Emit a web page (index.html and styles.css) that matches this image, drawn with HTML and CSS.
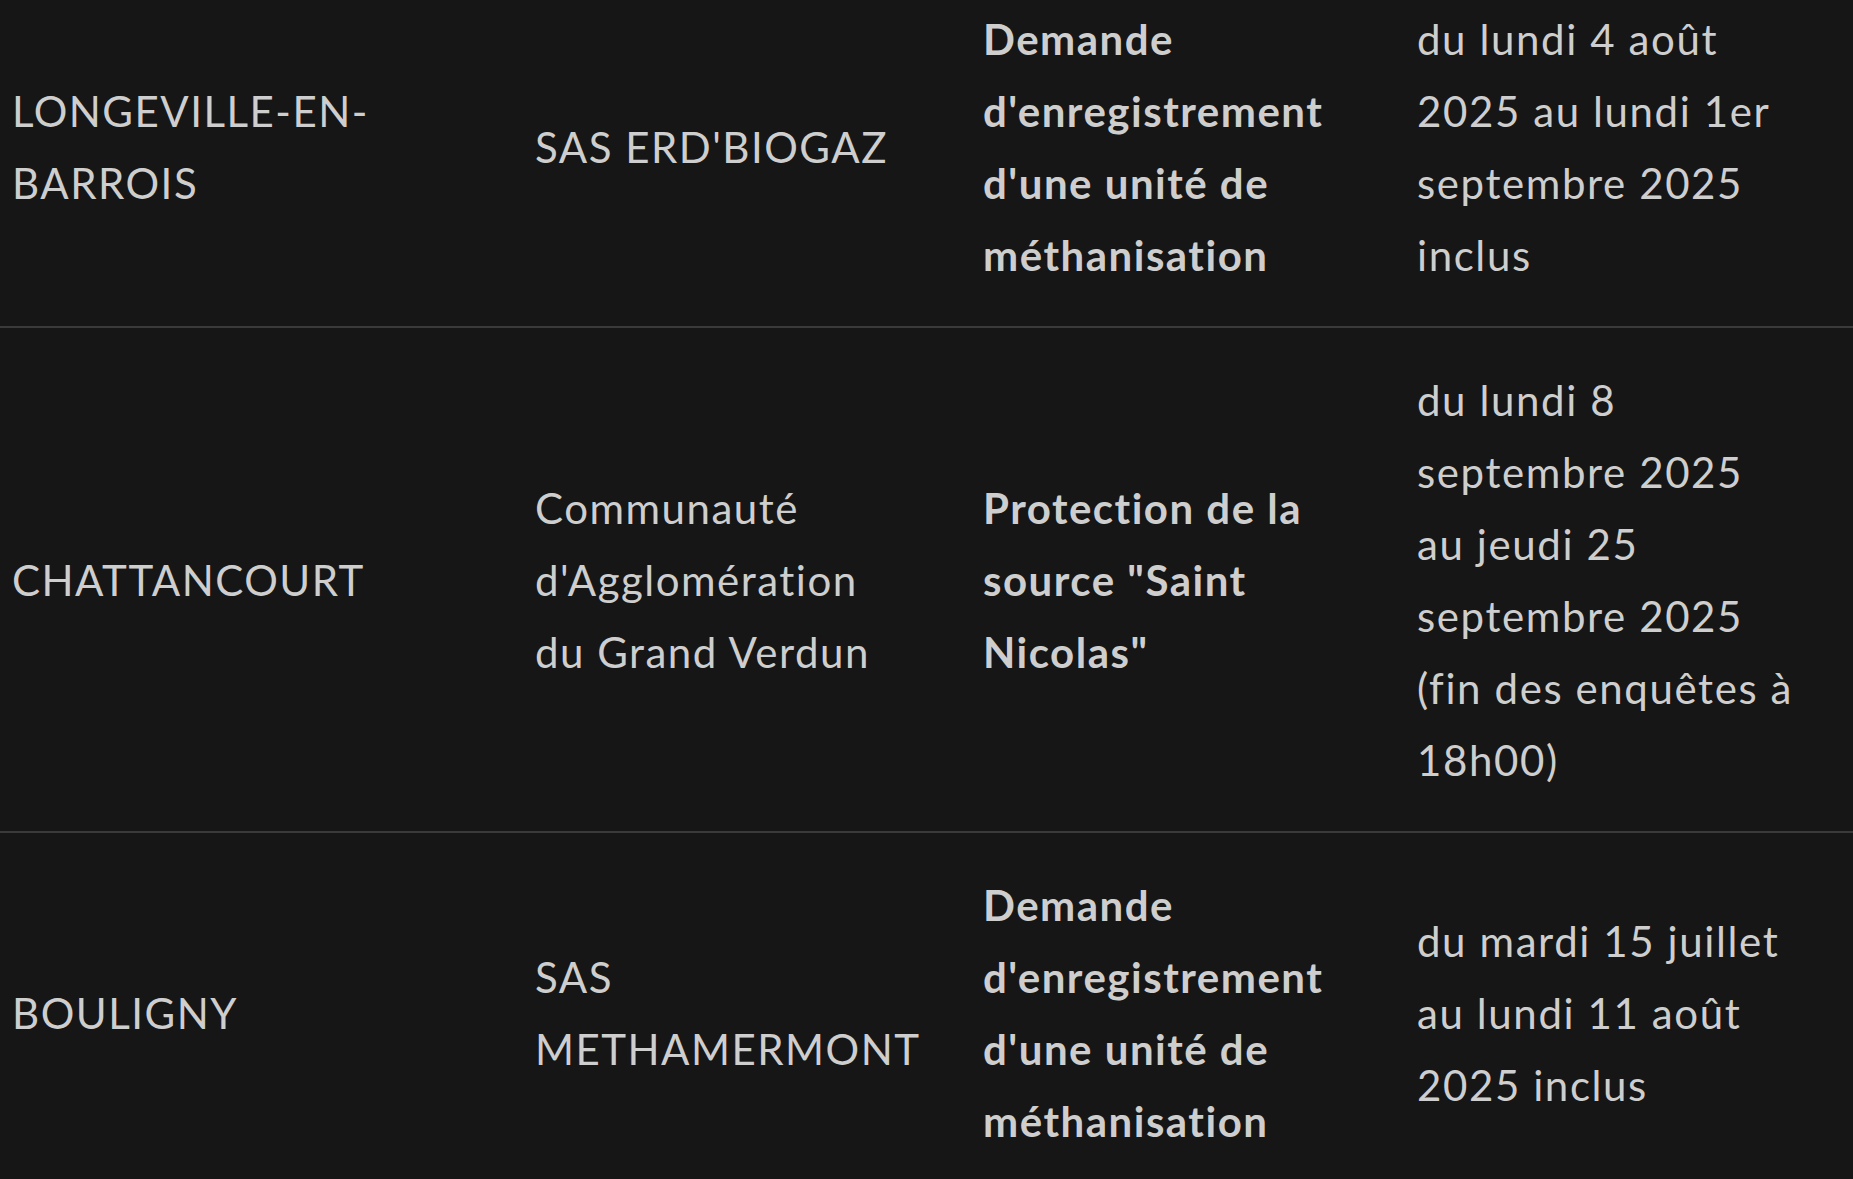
FILE: index.html
```html
<!DOCTYPE html>
<html lang="fr">
<head>
<meta charset="utf-8">
<title>Enquêtes publiques</title>
<link rel="stylesheet" href="styles.css">
</head>
<body>
<div class="table-wrap">
<table class="enquetes">
<colgroup>
<col class="c-commune">
<col class="c-petitionnaire">
<col class="c-objet">
<col class="c-dates">
</colgroup>
<tbody>
<tr>
<td class="commune">LONGEVILLE-EN-BARROIS</td>
<td class="petitionnaire">SAS ERD'BIOGAZ</td>
<td class="objet">Demande d'enregistrement d'une unité de méthanisation</td>
<td class="dates">du lundi 4 août 2025 au lundi 1er septembre 2025 inclus</td>
</tr>
<tr>
<td class="commune">CHATTANCOURT</td>
<td class="petitionnaire">Communauté d'Agglomération du&nbsp;Grand Verdun</td>
<td class="objet">Protection de la source "Saint Nicolas"</td>
<td class="dates">du lundi 8 septembre 2025 au&nbsp;jeudi 25 septembre 2025 (fin des enquêtes à 18h00)</td>
</tr>
<tr>
<td class="commune">BOULIGNY</td>
<td class="petitionnaire">SAS METHAMERMONT</td>
<td class="objet">Demande d'enregistrement d'une unité de méthanisation</td>
<td class="dates">du mardi 15 juillet au lundi 11 août 2025 inclus</td>
</tr>
</tbody>
</table>
</div>
</body>
</html>
```

FILE: styles.css
```css
html, body {
  margin: 0;
  padding: 0;
  background: #161616;
}

body {
  font-family: Lato, "Open Sans", "Liberation Sans", sans-serif;
  color: #cecece;
  overflow: hidden;
}

.table-wrap {
  margin-top: -33px;
}

.enquetes {
  width: 1853px;
  border-collapse: collapse;
  table-layout: fixed;
  font-size: 42px;
  line-height: 72px;
  letter-spacing: 1.5px;
}

.c-commune { width: 523px; }
.c-petitionnaire { width: 448px; }
.c-objet { width: 434px; }
.c-dates { width: 448px; }

.enquetes tr {
  border-bottom: 2px solid #3a3a3a;
}

.enquetes td {
  padding: 36px 44px 35px 12px;
  vertical-align: middle;
  text-align: left;
}

.enquetes td.dates {
  letter-spacing: 1.6px;
}

.objet {
  font-weight: 700;
}
```
